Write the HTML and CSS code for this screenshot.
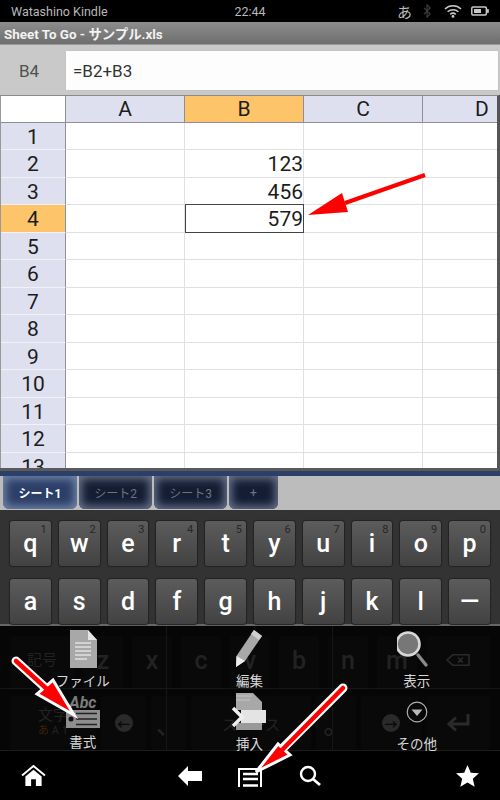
FILE: index.html
```html
<!DOCTYPE html>
<html lang="ja">
<head>
<meta charset="utf-8">
<title>Sheet To Go</title>
<link rel="stylesheet" href="styles.css">
</head>
<body>
<div class="screen">
  <header class="status">
    <span class="carrier">Watashino Kindle</span>
    <span class="clock">22:44</span>
    <span class="tray">
      <span class="ime">あ</span>
      <svg class="ic-bt" viewBox="0 0 10 16"><path d="M1 4.500l7 7-3.500 3.500V1L8 4.500l-7 7" fill="none" stroke="#3c3c3c" stroke-width="1.400"/></svg>
      <svg class="ic-wifi" viewBox="0 0 18 14"><path d="M1 5a11.500 11.500 0 0 1 16 0M3.600 7.800a8 8 0 0 1 10.800 0M6.200 10.400a4.200 4.200 0 0 1 5.600 0" fill="none" stroke="#c8c8c8" stroke-width="1.500"/><circle cx="9" cy="12.400" r="1.400" fill="#c8c8c8"/></svg>
      <svg class="ic-batt" viewBox="0 0 18 10"><rect x=".8" y="1" width="14.600" height="8" rx="1.200" fill="none" stroke="#c8c8c8" stroke-width="1.500"/><rect x="3" y="3" width="7" height="4" fill="#c8c8c8"/><rect x="15.800" y="3.200" width="2" height="3.600" fill="#c8c8c8"/></svg>
    </span>
  </header>
  <div class="title">Sheet To Go - サンプル.xls</div>
  <div class="formula">
    <div class="cellref">B4</div>
    <div class="fx">=B2+B3</div>
  </div>
  <div class="sheet">
    <div class="grid">
      <div class="corner"></div><div class="ch">A</div><div class="ch ch-on">B</div><div class="ch">C</div><div class="ch">D</div>
      <div class="rh">1</div><div class="c"></div><div class="c"></div><div class="c"></div><div class="c"></div>
      <div class="rh">2</div><div class="c"></div><div class="c">123</div><div class="c"></div><div class="c"></div>
      <div class="rh">3</div><div class="c"></div><div class="c">456</div><div class="c"></div><div class="c"></div>
      <div class="rh rh-on">4</div><div class="c"></div><div class="c c-on">579</div><div class="c"></div><div class="c"></div>
      <div class="rh">5</div><div class="c"></div><div class="c"></div><div class="c"></div><div class="c"></div>
      <div class="rh">6</div><div class="c"></div><div class="c"></div><div class="c"></div><div class="c"></div>
      <div class="rh">7</div><div class="c"></div><div class="c"></div><div class="c"></div><div class="c"></div>
      <div class="rh">8</div><div class="c"></div><div class="c"></div><div class="c"></div><div class="c"></div>
      <div class="rh">9</div><div class="c"></div><div class="c"></div><div class="c"></div><div class="c"></div>
      <div class="rh">10</div><div class="c"></div><div class="c"></div><div class="c"></div><div class="c"></div>
      <div class="rh">11</div><div class="c"></div><div class="c"></div><div class="c"></div><div class="c"></div>
      <div class="rh">12</div><div class="c"></div><div class="c"></div><div class="c"></div><div class="c"></div>
      <div class="rh">13</div><div class="c"></div><div class="c"></div><div class="c"></div><div class="c"></div>
    </div>
  </div>
  <div class="tabbar">
    <div class="tab tab-on">シート1</div>
    <div class="tab">シート2</div>
    <div class="tab">シート3</div>
    <div class="tab tab-add">+</div>
  </div>
  <div class="keyboard">
    <div class="keys">
      <div class="key">q<sup>1</sup></div><div class="key">w<sup>2</sup></div><div class="key">e<sup>3</sup></div><div class="key">r<sup>4</sup></div><div class="key">t<sup>5</sup></div><div class="key">y<sup>6</sup></div><div class="key">u<sup>7</sup></div><div class="key">i<sup>8</sup></div><div class="key">o<sup>9</sup></div><div class="key">p<sup>0</sup></div>
    </div>
    <div class="keys">
      <div class="key">a</div><div class="key">s</div><div class="key">d</div><div class="key">f</div><div class="key">g</div><div class="key">h</div><div class="key">j</div><div class="key">k</div><div class="key">l</div><div class="key">—</div>
    </div>
  </div>
  <div class="lower">
    <div class="dim">
      <div class="dim-row1">
        <div class="dk dk-sm">記号</div><div class="dk">z</div><div class="dk">x</div><div class="dk">c</div><div class="dk">v</div><div class="dk">b</div><div class="dk">n</div><div class="dk">m</div>
        <div class="dk"><svg class="dim-del" viewBox="0 0 24 12"><path d="M1 6l6-5.300h16v10.600H7zM12 3.500l5 5M17 3.500l-5 5" fill="none" stroke="#2a2a2a" stroke-width="1.600"/></svg></div>
      </div>
      <div class="dim-row2">
        <div class="dk dk-mode"><span>文字</span><small><b>あ</b> A 1</small></div>
        <div class="dk"><span class="dim-circ">←</span></div>
        <div class="dk">、</div>
        <div class="dk dk-sm">スペース</div>
        <div class="dk">。</div>
        <div class="dk"><span class="dim-circ">→</span></div>
        <div class="dk"><svg class="dim-enter" viewBox="0 0 24 20"><path d="M22 1v10H4M10 4.500L3 11l7 6.500" fill="none" stroke="#2a2a2a" stroke-width="3"/></svg></div>
      </div>
    </div>
    <div class="menu">
      <div class="mi">
        <svg class="mi-ic" viewBox="0 0 40 40"><path d="M7 1h18l9 10v28H7z" fill="#a8a8a8"/><path d="M25 1l9 10h-9z" fill="#e4e4e4"/><path d="M12 14h16M12 18h16M12 22h16M12 26h16M12 30h12" stroke="#e0e0e0" stroke-width="1.500"/></svg>
        <span>ファイル</span>
      </div>
      <div class="mi">
        <svg class="mi-ic" viewBox="0 0 40 40"><path d="M25 1l8 6-17 25-9 6 .5-11z" fill="#a8a8a8"/><path d="M25 1l8 6-3 4-8-6z" fill="#d0d0d0"/><path d="M7.500 27l8.500 5-9 6z" fill="#eee"/></svg>
        <span>編集</span>
      </div>
      <div class="mi">
        <svg class="mi-ic" viewBox="0 0 40 40"><circle cx="11" cy="15" r="11.500" fill="#777" stroke="#d8d8d8" stroke-width="2.600"/><path d="M21 26l8 10" stroke="#8a8a8a" stroke-width="3.400" stroke-linecap="round"/></svg>
        <span>表示</span>
      </div>
      <div class="mi">
        <div class="fmt-ic">
          <span class="abc">Abc</span>
          <svg class="fmt-box" viewBox="0 0 34 18"><rect width="34" height="18" fill="#8e8e8e"/><path d="M10 3.500h21M10 9h21M10 14.500h21" stroke="#222" stroke-width="1.600"/><circle cx="5" cy="9" r="2.500" fill="#111"/></svg>
        </div>
        <span>書式</span>
      </div>
      <div class="mi">
        <svg class="mi-ic" viewBox="0 0 40 40"><path d="M7 1h17l9 9v8H7z" fill="#a8a8a8"/><path d="M7 4h16M7 8h14" stroke="#c4c4c4" stroke-width="1"/><rect x="12" y="18" width="25" height="13" fill="#e4e4e4"/><path d="M7 31h26v7H7z" fill="#999"/><path d="M4 16l9 9-9 9" fill="none" stroke="#eee" stroke-width="3.500"/></svg>
        <span>挿入</span>
      </div>
      <div class="mi">
        <svg class="other-ic" viewBox="0 0 22 22"><circle cx="11" cy="11" r="9.800" fill="none" stroke="#b0b0b0" stroke-width="1.200"/><path d="M5.500 8.500h11L11 15z" fill="#b8b8b8"/></svg>
        <span>その他</span>
      </div>
    </div>
  </div>
  <nav class="nav">
    <svg class="nav-home" viewBox="0 0 26 22"><path d="M1 11L13 1l12 10" fill="none" stroke="#fff" stroke-width="2"/><path d="M4.500 12L13 5l8.500 7v10h-6v-7h-5v7h-6z" fill="#fff"/></svg>
    <svg class="nav-back" viewBox="0 0 24 20"><path d="M0 10L10 0v5h14v10H10v5z" fill="#fff"/></svg>
    <svg class="nav-list" viewBox="0 0 24 19"><path d="M1 19V1h22v18" fill="none" stroke="#fff" stroke-width="2"/><path d="M5 6h15M5 11h15M5 17.500h15" stroke="#fff" stroke-width="2.400"/></svg>
    <svg class="nav-search" viewBox="0 0 22 22"><circle cx="9" cy="9" r="7" fill="none" stroke="#fff" stroke-width="2.400"/><path d="M14 14l7 6" stroke="#fff" stroke-width="2.800"/></svg>
    <svg class="nav-star" viewBox="0 0 24 23"><path d="M12 0l3.400 8 8.600.7-6.500 5.600 2 8.400L12 18.200 4.500 22.700l2-8.400L0 8.700 8.600 8z" fill="#fff"/></svg>
  </nav>
  <svg class="arrows" viewBox="0 0 500 800">
    <path d="M425 175L345 203" stroke="#f00" stroke-width="4" fill="none"/>
    <path d="M308 215L342 193L348 212z" fill="#f00"/>
    <path d="M16 661L50 692" stroke="#fff" stroke-width="9" stroke-linecap="round" fill="none"/>
    <path d="M74 715L53 680L37 694z" fill="#f00" stroke="#fff" stroke-width="3"/>
    <path d="M16 661L48 690" stroke="#f00" stroke-width="4.500" stroke-linecap="round" fill="none"/>
    <path d="M343 688L284 747" stroke="#fff" stroke-width="9" stroke-linecap="round" fill="none"/>
    <path d="M256 772L278 744L290 755z" fill="#f00" stroke="#fff" stroke-width="3"/>
    <path d="M343 688L282 750" stroke="#f00" stroke-width="4.500" stroke-linecap="round" fill="none"/>
  </svg>
</div>
</body>
</html>
```
FILE: styles.css
```css
* { box-sizing: border-box; }
html, body { margin: 0; padding: 0; background: #000; }
.screen {
  position: relative;
  display: flex;
  flex-direction: column;
  width: 500px;
  height: 800px;
  overflow: hidden;
  font-family: Roboto, "Noto Sans CJK JP", sans-serif;
}
.status {
  display: grid;
  grid-template-columns: 1fr auto 1fr;
  align-items: center;
  height: 22px;
  padding: 0 11px;
  background: #000;
  color: #b9b9b9;
  font-size: 12.500px;
}
.tray { display: flex; justify-content: flex-end; align-items: center; }
.ime { font-size: 15px; color: #bdbdbd; margin-right: 11px; }
.ic-bt { width: 9px; height: 14px; margin-right: 12px; }
.ic-wifi { width: 18px; height: 14px; margin-right: 9px; }
.ic-batt { width: 18px; height: 10px; }
.title {
  display: flex;
  align-items: center;
  height: 23px;
  padding-left: 4px;
  background: linear-gradient(#8d8d8d, #6e6e6e);
  color: #f2f2f2;
  font-size: 13.400px;
  font-weight: 700;
  border-bottom: 1px solid #9b9b9b;
}
.formula {
  display: flex;
  height: 50px;
  padding: 6px 2px 5px 0;
  background: #c9c9c9;
}
.cellref {
  width: 66px;
  display: flex;
  align-items: center;
  justify-content: center;
  padding-right: 8px;
  color: #505050;
  font-size: 17px;
}
.fx {
  flex: 1;
  display: flex;
  align-items: center;
  padding-left: 7px;
  background: #fdfdfd;
  color: #333;
  font-size: 17px;
  box-shadow: 0 0 1px #aaa;
}
.sheet {
  height: 373px;
  overflow: hidden;
  background: #fff;
  border-top: 1px solid #8a8a8a;
  border-left: 1px solid #999;
  border-right: 3px solid #555;
}
.grid {
  display: grid;
  grid-template-columns: 65px 119px 119px 119px 119px;
  grid-template-rows: 26.500px repeat(13, 27.500px);
  font-size: 21px;
  color: #1c1c1c;
}
.corner { background: #fff; border-right: 1px solid #8e8e9a; border-bottom: 1px solid #8e8e9a; }
.ch {
  display: flex;
  align-items: center;
  justify-content: center;
  padding-top: 1px;
  background: #dfe0ef;
  border-right: 1px solid #8e8e9a;
  border-bottom: 1px solid #8e8e9a;
}
.ch-on { background: #fec469; }
.rh {
  display: flex;
  align-items: center;
  justify-content: center;
  padding-top: 2px;
  background: #dfe0ef;
  border-right: 1px solid #8e8e9a;
  border-bottom: 1px solid #f2f2f6;
}
.rh-on { background: #fec469; }
.c {
  display: flex;
  align-items: center;
  justify-content: flex-end;
  padding-top: 2px;
  border-right: 1px solid #e0e0e4;
  border-bottom: 1px solid #e0e0e4;
}
.c-on { border: 1px solid #444; margin-top: -1px; }
.tabbar {
  position: relative;
  display: flex;
  gap: 2px;
  height: 42px;
  padding: 7px 0 0 3px;
  background: #bcbcbc;
  border-top: 3px solid #5a5a5a;
}
.tabbar::before {
  content: "";
  position: absolute;
  left: 0;
  right: 0;
  top: 0;
  height: 5px;
  background: #2b3f68;
}
.tab {
  width: 73px;
  height: 33px;
  margin-top: -2px;
  display: flex;
  align-items: center;
  justify-content: center;
  background: #141d33;
  border-radius: 0 0 6px 6px;
  box-shadow: inset 0 0 9px 3px #68728a;
  color: #70747e;
  font-size: 12px;
}
.tab-on {
  width: 74px;
  background: #2b3f68;
  box-shadow: inset 0 0 9px 3px #7385a8;
  color: #fff;
  font-weight: 700;
}
.tab-add { width: 49px; }
.keyboard {
  height: 116px;
  padding: 11px 10px 0;
  background: #333;
  border-bottom: 2px solid #666;
  display: flex;
  flex-direction: column;
  gap: 13px;
}
.keys {
  display: grid;
  grid-template-columns: repeat(10, 1fr);
  column-gap: 8px;
}
.key {
  position: relative;
  height: 45px;
  display: flex;
  align-items: center;
  justify-content: center;
  background: linear-gradient(#5c5c5c, #424242);
  border-radius: 3px;
  box-shadow: 0 0 1px 1px #222;
  color: #fff;
  font-size: 25px;
  font-weight: 500;
}
.key sup {
  position: absolute;
  top: 2px;
  right: 4px;
  color: #262626;
  font-size: 11px;
  font-weight: 400;
  line-height: 14px;
}
.lower { position: relative; height: 125px; background: #060606; }
.dim { display: flex; flex-direction: column; height: 100%; padding: 10px 10px 0; color: #222; }
.dim-row1 {
  display: grid;
  grid-template-columns: 64px repeat(7, 40px) 64px;
  column-gap: 9px;
  height: 54px;
}
.dim-row1 .dk { padding-bottom: 6px; line-height: 1; }
.dim-row2 {
  display: grid;
  grid-template-columns: 86px 45px 35px 120px 40px 60px 1fr;
  column-gap: 5px;
  height: 54px;
  margin-top: 6px;
}
.dk {
  display: flex;
  flex-direction: column;
  align-items: center;
  justify-content: center;
  background: #090909;
  border-radius: 3px;
  font-size: 25px;
  font-weight: 500;
}
.dk-sm { font-size: 15px; font-weight: 400; }
.dk-mode { font-size: 15px; font-weight: 400; line-height: 16px; }
.dk-mode small { font-size: 11px; }
.dk-mode b { color: #3a2408; font-weight: 400; }
.dim-del { width: 24px; height: 12px; }
.dim-enter { width: 24px; height: 20px; }
.dim-circ {
  display: flex;
  align-items: center;
  justify-content: center;
  width: 18px;
  height: 18px;
  border-radius: 50%;
  background: #2a2a2a;
  color: #090909;
  font-size: 13px;
  font-weight: 700;
}
.menu {
  position: absolute;
  inset: 0;
  display: grid;
  grid-template-columns: repeat(3, 1fr);
  grid-template-rows: 63px 62px;
  border-bottom: 1px solid #1c1c1c;
}
.mi {
  display: flex;
  flex-direction: column;
  align-items: center;
  padding-top: 3px;
  color: #d8d8d8;
  font-size: 13.500px;
  line-height: 18px;
  border-right: 1px solid #161616;
  border-bottom: 1px solid #161616;
}
.mi span { margin-top: 3px; }
.mi:nth-child(3n) { border-right: 0; }
.mi:nth-child(n+4) { border-bottom: 0; }
.mi-ic { width: 40px; height: 40px; flex: none; }
.other-ic { width: 22px; height: 22px; margin: 9px 0; flex: none; }
.fmt-ic { display: flex; flex-direction: column; align-items: center; height: 40px; padding-top: 4px; }
.mi .abc {
  margin: 0;
  color: #7c7c7c;
  font-size: 16px;
  font-weight: 700;
  font-style: italic;
  line-height: 14px;
}
.fmt-box { width: 34px; height: 18px; }
.nav {
  display: flex;
  align-items: center;
  height: 49px;
  padding-left: 21px;
  background: #000;
}
.nav-home { width: 25px; height: 21px; margin-right: 132px; }
.nav-back { width: 24px; height: 20px; margin-right: 36px; }
.nav-list { width: 24px; height: 19px; margin: 3px 37px 0 0; }
.nav-search { width: 22px; height: 22px; margin-right: 135px; }
.nav-star { width: 23px; height: 22px; }
.arrows { position: absolute; inset: 0; width: 500px; height: 800px; pointer-events: none; }
```
